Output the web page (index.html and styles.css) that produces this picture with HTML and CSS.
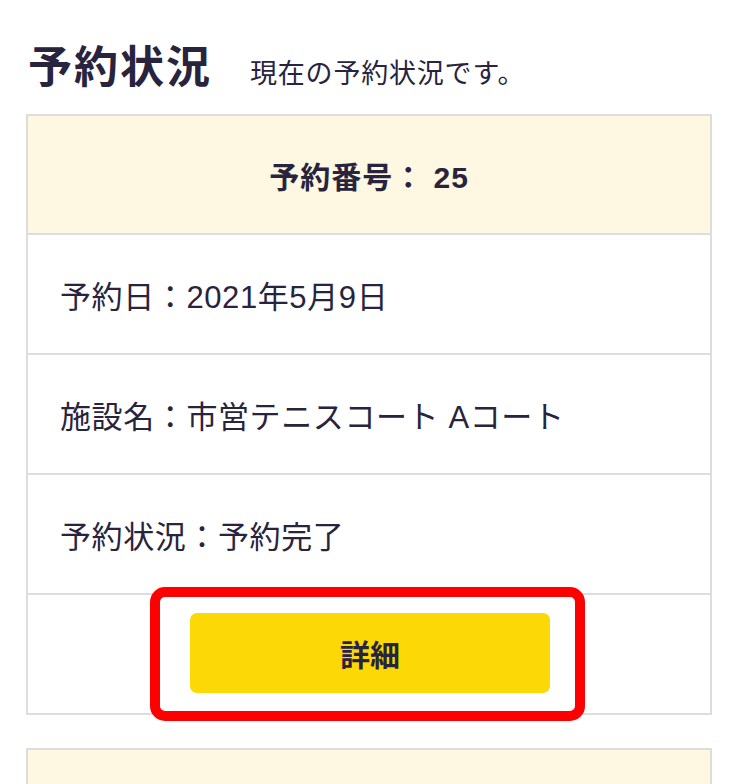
FILE: index.html
```html
<!DOCTYPE html>
<html lang="ja">
<head>
<meta charset="utf-8">
<title>予約状況</title>
<link rel="stylesheet" href="styles.css">
</head>
<body>
<main class="page">
  <div class="title-row">
    <h1 class="title">予約状況</h1>
    <p class="subtitle">現在の予約状況です。</p>
  </div>

  <section class="card">
    <div class="card-head">予約番号： 25</div>
    <div class="card-row">予約日：2021年5月9日</div>
    <div class="card-row">施設名：市営テニスコート Aコート</div>
    <div class="card-row">予約状況：予約完了</div>
    <div class="card-action">
      <div class="btn-wrap">
        <button class="btn" type="button">詳細</button>
        <span class="highlight"></span>
      </div>
    </div>
  </section>

  <section class="card">
    <div class="card-head"></div>
  </section>
</main>
</body>
</html>
```

FILE: styles.css
```css
* { box-sizing: border-box; }

html, body {
  margin: 0;
  padding: 0;
  background: #ffffff;
}

body {
  font-family: "Liberation Sans", "Noto Sans CJK JP", sans-serif;
  color: #28243d;
  overflow: hidden;
  height: 784px;
}

.page {
  padding: 40px 24px 0 26px;
}

.title-row {
  display: flex;
  align-items: baseline;
  gap: 38px;
  padding-left: 2px;
  height: 74px;
}

.title {
  margin: 0;
  font-size: 44px;
  font-weight: 700;
  line-height: 56px;
  letter-spacing: 2px;
}

.subtitle {
  margin: 0;
  font-size: 27px;
  font-weight: 400;
  line-height: 40px;
  letter-spacing: 0.8px;
}

.card {
  border: 2px solid #dddddd;
  width: 686px;
  margin-bottom: 33px;
}

.card-head {
  height: 117px;
  background: #fef7e1;
  display: flex;
  align-items: center;
  justify-content: center;
  font-size: 30px;
  font-weight: 700;
  letter-spacing: 1px;
}

.card-row {
  height: 120px;
  border-top: 2px solid #dddddd;
  display: flex;
  align-items: center;
  padding-left: 32px;
  font-size: 31px;
  letter-spacing: 0.6px;
}

.card-action {
  border-top: 2px solid #dddddd;
  height: 120px;
  display: flex;
  justify-content: center;
  padding-top: 18px;
}

.btn-wrap {
  position: relative;
  width: 360px;
  height: 80px;
  margin-left: 2px;
}

.btn {
  width: 100%;
  height: 100%;
  border: none;
  border-radius: 7px;
  background: #fcd806;
  color: #28243d;
  font-family: "Liberation Sans", "Noto Sans CJK JP", sans-serif;
  font-size: 30px;
  font-weight: 700;
  cursor: pointer;
}

.highlight {
  position: absolute;
  top: -26px;
  left: -40px;
  right: -35px;
  bottom: -28px;
  border: 10px solid #ff0000;
  border-radius: 15px;
  pointer-events: none;
}
```
